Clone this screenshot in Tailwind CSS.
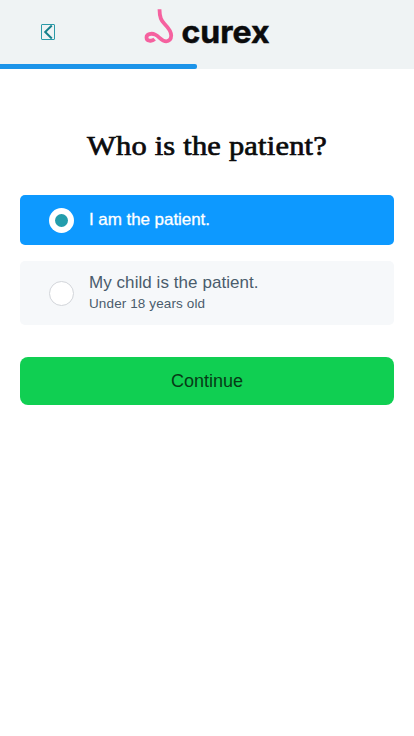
<!DOCTYPE html>
<html lang="en">
<head>
    <meta charset="UTF-8">
    <meta name="viewport" content="width=device-width, initial-scale=1.0">
    <title>Curex - Who is the patient?</title>
    <script src="https://cdn.jsdelivr.net/npm/@tailwindcss/browser@4"></script>
</head>
<body class="bg-white min-h-screen font-['Liberation_Sans',Arial,sans-serif]">
    <!-- Header -->
    <header class="bg-[#eff3f4] h-[69px] flex flex-col justify-between">
        <div class="grid grid-cols-[82px_1fr_82px] h-16">
            <button type="button" aria-label="Back" class="flex pl-[41px] pt-6">
                <svg class="w-[14px] h-4" viewBox="0 0 14 16" fill="none">
                    <rect x=".5" y=".5" width="13" height="15" rx=".5" stroke="#2b9aa8" />
                    <path d="M10.8 1.5 4.2 8l6.6 6.5" stroke="#16808c" stroke-width="2" />
                </svg>
            </button>
            <svg class="mx-auto w-[130px] h-16 overflow-visible" viewBox="142 0 130 64" role="img" aria-label="curex">
                <path d="M159.5 9.2C159.6 17.5 161.2 20.6 164.8 24.3C168.3 27.8 171.2 31.5 171.2 35.6C171.2 39.2 169.2 41.3 166.2 41.3C161.4 41.3 159.5 36.6 155.2 34.6C151.4 32.8 146.5 34.2 146.5 37.4C146.5 41 151.8 41.8 154.6 39.2" fill="none" stroke="#f5619f" stroke-width="3.8" stroke-linejoin="round" />
                <text x="181.5" y="43.4" textLength="88" lengthAdjust="spacingAndGlyphs" class="font-['Inter',sans-serif] font-bold text-[31px]" fill="#0b0b0c" stroke="#0b0b0c" stroke-width=".5">curex</text>
            </svg>
        </div>
        <div class="h-[5px]">
            <div class="h-full w-[197px] bg-[#1c94e9] rounded-r-xs"></div>
        </div>
    </header>

    <main class="px-5 pt-[60px]">
        <h1 class="h-[66px] flex justify-center">
            <svg class="w-[244px] h-9" viewBox="85 129 244 36">
                <text x="87" y="155" textLength="240" lengthAdjust="spacingAndGlyphs" class="font-['Liberation_Serif',serif] text-[28px] tracking-[0.2px]" fill="#0b0b0c" stroke="#0b0b0c" stroke-width=".7">Who is the patient?</text>
            </svg>
        </h1>

        <!-- Options -->
        <div class="flex flex-col gap-4">
            <label class="flex items-center h-[50px] pl-[29px] rounded-[5px] bg-[#0d99ff] text-white">
                <span class="size-[25px] rounded-full bg-white flex items-center justify-center">
                    <span class="size-[13px] rounded-full bg-[#239dac]"></span>
                </span>
                <span class="ml-[15px] text-[17px] leading-6 tracking-[-0.06px] [-webkit-text-stroke:0.3px_white]">I am the patient.</span>
            </label>
            <label class="flex items-center h-16 pl-[29px] rounded-[5px] bg-[#f6f8fa] text-[#4a5c6c]">
                <span class="size-[25px] rounded-full bg-white border border-[#d2d5da]"></span>
                <span class="ml-[15px] flex flex-col pb-px">
                    <span class="text-[17px] leading-[22px] tracking-[0.06px]">My child is the patient.</span>
                    <span class="text-[13.5px] leading-[19px] tracking-[0.12px]">Under 18 years old</span>
                </span>
            </label>
        </div>

        <button type="button" class="mt-8 w-full h-12 rounded-lg bg-[#10cf52] text-[#063b16] text-lg">Continue</button>
    </main>
</body>
</html>
